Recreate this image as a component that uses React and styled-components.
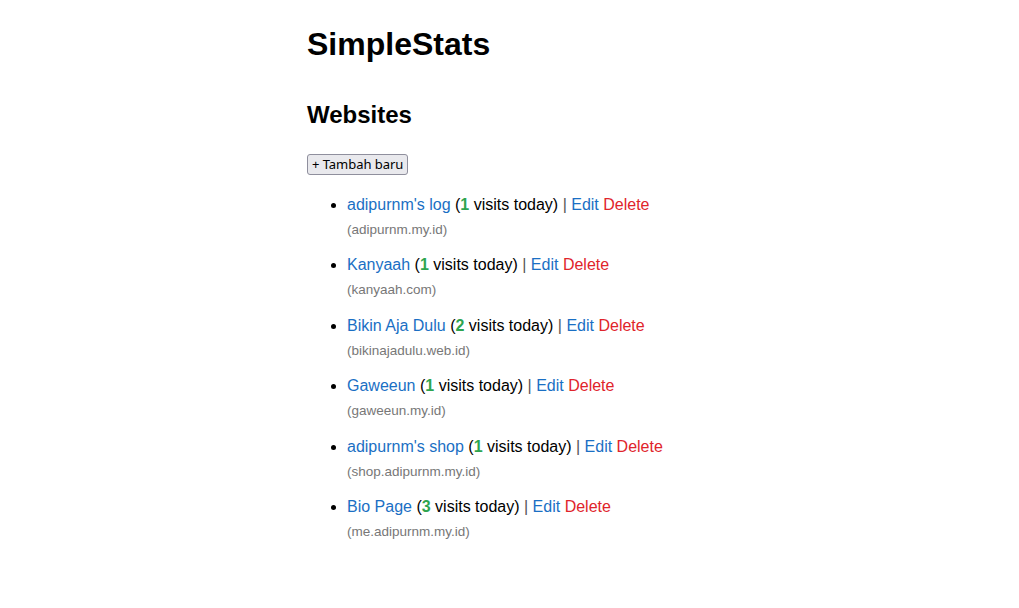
import React from "react";
import styled, { createGlobalStyle } from "styled-components";

const Global = createGlobalStyle`
  html, body { margin: 0; padding: 0; background: #fff; }
  body { font-family: "Liberation Sans", Arial, sans-serif; color: #000; }
`;

const Page = styled.main`
  max-width: 405px;
  margin: 0 auto;
  padding-top: 21px;
`;

const Title = styled.h1`
  font-size: 32px;
  font-weight: bold;
  margin: 0;
  line-height: 46px;
`;

const Heading = styled.h2`
  font-size: 24px;
  font-weight: bold;
  margin: 33px 0 0 0;
  line-height: 30px;
`;

const AddButton = styled.button`
  margin-top: 24px;
  font-family: "Noto Sans", "Open Sans", sans-serif;
  font-size: 13px;
  height: 21px;
  padding: 0 4px 0 4px;
  background: #e9e9ed;
  border: 1px solid #8f8f9d;
  border-radius: 3px;
  color: #000;
  display: block;
  line-height: 19px;
  letter-spacing: -0.05px;
`;

const List = styled.ul`
  margin: 20px 0 0 0;
  padding-left: 40px;
  list-style: disc;
`;

const Item = styled.li`
  font-size: 16px;
  line-height: 20px;
  margin-bottom: 17.4px;
`;

const Link = styled.a`
  color: ${(p) => (p.$danger ? "#e0242b" : "#1a6fc4")};
  text-decoration: none;
`;

const Count = styled.strong`
  color: #2ea44f;
`;

const Sep = styled.span`
  color: #555;
`;

const Domain = styled.div`
  font-size: 13.5px;
  color: #777;
  line-height: 16px;
  margin-top: 7px;
`;

const sites = [
  { name: "adipurnm's log", visits: 1, domain: "adipurnm.my.id" },
  { name: "Kanyaah", visits: 1, domain: "kanyaah.com" },
  { name: "Bikin Aja Dulu", visits: 2, domain: "bikinajadulu.web.id" },
  { name: "Gaweeun", visits: 1, domain: "gaweeun.my.id" },
  { name: "adipurnm's shop", visits: 1, domain: "shop.adipurnm.my.id" },
  { name: "Bio Page", visits: 3, domain: "me.adipurnm.my.id" },
];

export default function App() {
  return (
    <>
      <Global />
      <Page>
        <Title>SimpleStats</Title>
        <Heading>Websites</Heading>
        <AddButton>+ Tambah baru</AddButton>
        <List>
          {sites.map((s) => (
            <Item key={s.domain}>
              <Link href="#">{s.name}</Link> (<Count>{s.visits}</Count> visits today){" "}
              <Sep>|</Sep> <Link href="#">Edit</Link> <Link href="#" $danger>Delete</Link>
              <Domain>({s.domain})</Domain>
            </Item>
          ))}
        </List>
      </Page>
    </>
  );
}
